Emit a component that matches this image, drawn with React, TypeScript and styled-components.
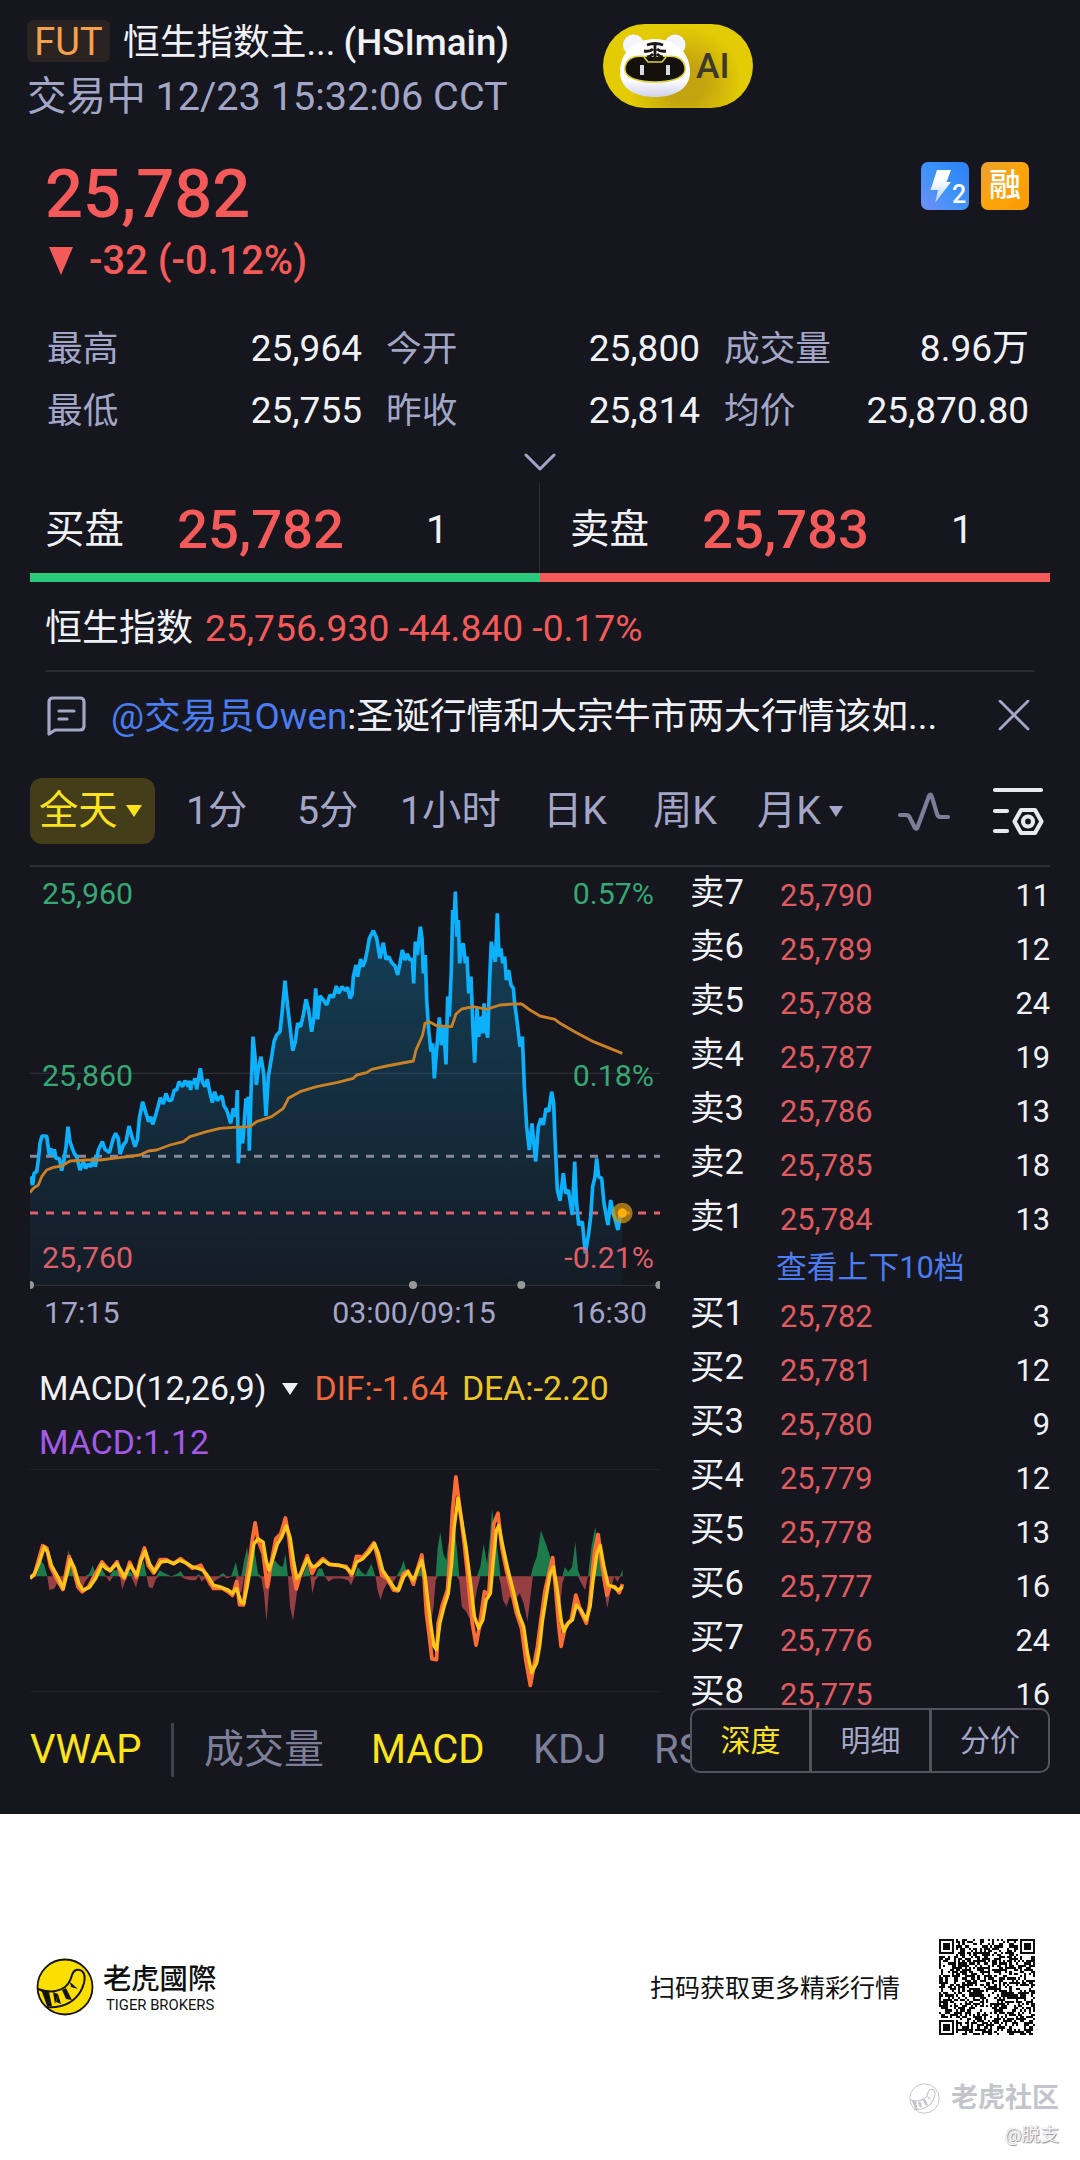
import styled, { createGlobalStyle } from "styled-components";

const GlobalStyle = createGlobalStyle`
  * {
    box-sizing: border-box;
  }

  body {
    margin: 0;
    background: #ffffff;
    font-family: Roboto, "Noto Sans CJK SC", sans-serif;
  }
`;

const colors = {
  bg: "#15161e",
  text: "#f0f1f5",
  muted: "#a3a6c6",
  dim: "#7d7f98",
  red: "#f35a59",
  bookRed: "#df5b60",
  green: "#2bc97b",
  chartGreen: "#36a873",
  yellow: "#fbe41c",
  blue: "#4b7cf0",
  line: "#2b2c34",
};

type Point = [number, number];

// ---------- data ----------

const stats = [
  { label: "最高", value: "25,964" },
  { label: "今开", value: "25,800" },
  { label: "成交量", value: "8.96万" },
  { label: "最低", value: "25,755" },
  { label: "昨收", value: "25,814" },
  { label: "均价", value: "25,870.80" },
];

const asks = [
  { label: "卖7", price: "25,790", size: 11 },
  { label: "卖6", price: "25,789", size: 12 },
  { label: "卖5", price: "25,788", size: 24 },
  { label: "卖4", price: "25,787", size: 19 },
  { label: "卖3", price: "25,786", size: 13 },
  { label: "卖2", price: "25,785", size: 18 },
  { label: "卖1", price: "25,784", size: 13 },
];

const bids = [
  { label: "买1", price: "25,782", size: 3 },
  { label: "买2", price: "25,781", size: 12 },
  { label: "买3", price: "25,780", size: 9 },
  { label: "买4", price: "25,779", size: 12 },
  { label: "买5", price: "25,778", size: 13 },
  { label: "买6", price: "25,777", size: 16 },
  { label: "买7", price: "25,776", size: 24 },
  { label: "买8", price: "25,775", size: 16 },
];

const pricePoints: Point[] = [
  [30, 950], [38, 975], [42, 940], [50, 935], [55, 900], [60, 850], [66, 828], [80, 828], [85, 865], [88, 885],
  [92, 865], [98, 885], [103, 868], [108, 895], [118, 895], [125, 932], [132, 900], [138, 860], [144, 800], [150, 845],
  [157, 865], [163, 880], [170, 890], [180, 930], [190, 905], [197, 925], [205, 912], [213, 920], [220, 893], [226, 920],
  [235, 870], [247, 845], [255, 868], [268, 878], [280, 835], [287, 820], [295, 835], [300, 882], [310, 855], [318, 845],
  [327, 798], [336, 830], [345, 860], [352, 840], [358, 775], [368, 725], [378, 760], [386, 785], [392, 770], [398, 793],
  [407, 765], [414, 740], [421, 713], [430, 732], [438, 700], [446, 722], [455, 720], [463, 690], [470, 690], [477, 665],
  [488, 680], [495, 662], [505, 680], [507, 662], [512, 690], [515, 665], [520, 672], [525, 655], [530, 688], [535, 660],
  [541, 625], [547, 665], [555, 680], [562, 658], [568, 690], [577, 728], [584, 695], [592, 722], [600, 712], [606, 708],
  [612, 738], [620, 750], [632, 790], [640, 745], [648, 770], [652, 690], [655, 910], [662, 800], [668, 850], [678, 715],
  [683, 760], [685, 710], [688, 872], [693, 700], [699, 530], [705, 590], [709, 675], [715, 625], [723, 590], [731, 640],
  [738, 768], [745, 650], [755, 590], [762, 545], [770, 525], [780, 515], [786, 460], [795, 362], [803, 440], [810, 500],
  [818, 572], [826, 545], [833, 490], [842, 500], [850, 465], [858, 418], [866, 450], [875, 515], [882, 470], [887, 385],
  [893, 478], [900, 408], [910, 420], [920, 435], [930, 405], [940, 412], [949, 378], [956, 400], [966, 380], [976, 392],
  [983, 382], [990, 415], [996, 405], [1000, 350], [1008, 315], [1013, 350], [1022, 297], [1028, 320], [1036, 300], [1042, 270],
  [1048, 235], [1060, 212], [1070, 235], [1080, 295], [1090, 248], [1098, 298], [1106, 290], [1115, 308], [1125, 318], [1133, 345],
  [1140, 310], [1147, 270], [1155, 300], [1162, 282], [1170, 300], [1177, 298], [1181, 370], [1186, 245], [1192, 285], [1201, 200],
  [1206, 235], [1210, 340], [1216, 285], [1220, 420], [1226, 510], [1233, 575], [1238, 550], [1243, 655], [1249, 580], [1258, 472],
  [1264, 555], [1271, 500], [1278, 613], [1283, 410], [1288, 470], [1294, 330], [1298, 150], [1302, 190], [1306, 95], [1311, 230],
  [1315, 180], [1319, 310], [1325, 260], [1330, 250], [1336, 310], [1341, 290], [1346, 400], [1353, 350], [1359, 510], [1364, 608],
  [1371, 440], [1376, 530], [1384, 470], [1388, 520], [1392, 430], [1397, 500], [1403, 533], [1409, 360], [1414, 245], [1420, 285],
  [1426, 305], [1432, 160], [1437, 290], [1443, 265], [1448, 310], [1454, 290], [1459, 360], [1466, 330], [1473, 375], [1480, 385],
  [1484, 430], [1492, 490], [1500, 560], [1507, 530], [1513, 680], [1520, 800], [1528, 870], [1536, 790], [1547, 905], [1555, 800],
  [1563, 775], [1570, 795], [1578, 745], [1586, 755], [1595, 695], [1601, 730], [1606, 860], [1612, 990], [1620, 1022], [1630, 940],
  [1637, 1000], [1645, 990], [1657, 1065], [1664, 905], [1669, 1020], [1676, 1095], [1687, 1085], [1696, 1180], [1706, 1120], [1712, 1070],
  [1718, 980], [1725, 950], [1730, 895], [1736, 950], [1745, 955], [1752, 1030], [1764, 1095], [1772, 1020], [1780, 1060], [1794, 1110],
  [1800, 1070], [1807, 1058],
];

const vwapPoints: Point[] = [
  [30, 998], [40, 985], [55, 975], [65, 950], [80, 930], [100, 922], [125, 918], [150, 903], [200, 900], [240, 900],
  [280, 895], [360, 885], [385, 873], [410, 870], [450, 855], [490, 845], [510, 830], [560, 815], [600, 805], [640, 802],
  [690, 800], [710, 785], [755, 770], [790, 745], [805, 715], [840, 695], [890, 680], [950, 668], [1000, 655], [1010, 645],
  [1040, 638], [1055, 628], [1100, 618], [1180, 603], [1188, 570], [1208, 525], [1215, 490], [1228, 485], [1250, 497], [1295, 500],
  [1308, 462], [1325, 447], [1360, 440], [1400, 448], [1440, 435], [1480, 432], [1505, 432], [1530, 450], [1560, 468], [1605, 478],
  [1620, 490], [1660, 513], [1720, 545], [1807, 580],
];

const deaPoints: Point[] = [
  [24, 655], [35, 640], [45, 610], [58, 560], [66, 575], [75, 615], [90, 650], [103, 685], [112, 640], [120, 598],
  [130, 625], [140, 670], [150, 690], [165, 682], [180, 655], [195, 612], [205, 625], [215, 630], [230, 610], [240, 630],
  [248, 650], [262, 615], [278, 645], [288, 600], [298, 572], [308, 610], [320, 635], [335, 605], [350, 602], [365, 610],
  [380, 600], [395, 608], [410, 620], [425, 625], [435, 630], [445, 645], [460, 675], [480, 682], [495, 690], [505, 700],
  [515, 685], [525, 725], [532, 730], [540, 680], [548, 620], [556, 550], [566, 535], [578, 545], [585, 600], [592, 630],
  [600, 600], [612, 550], [622, 530], [633, 495], [642, 530], [650, 600], [658, 655], [668, 640], [683, 595], [695, 620],
  [708, 615], [720, 600], [735, 612], [760, 615], [775, 622], [790, 640], [800, 605], [815, 595], [830, 575], [843, 550],
  [852, 580], [862, 630], [875, 655], [890, 685], [900, 690], [912, 650], [922, 635], [935, 660], [945, 630], [955, 600],
  [962, 640], [970, 730], [977, 800], [984, 860], [990, 870], [998, 790], [1008, 740], [1018, 700], [1026, 610], [1032, 500],
  [1041, 412], [1050, 480], [1060, 560], [1070, 660], [1080, 770], [1090, 805], [1100, 780], [1108, 720], [1118, 700], [1125, 600],
  [1132, 510], [1138, 495], [1148, 560], [1160, 630], [1172, 690], [1185, 760], [1197, 800], [1206, 880], [1216, 940], [1228, 910],
  [1235, 860], [1242, 780], [1252, 700], [1260, 640], [1268, 620], [1277, 690], [1286, 780], [1292, 815], [1303, 790], [1313, 780],
  [1322, 735], [1333, 750], [1346, 780], [1355, 740], [1362, 660], [1371, 580], [1379, 555], [1388, 620], [1398, 675], [1410, 680],
  [1422, 690], [1432, 680],
];

const difPoints: Point[] = [
  [24, 652], [34, 645], [43, 605], [54, 556], [64, 563], [73, 620], [87, 655], [102, 688], [109, 640], [117, 588],
  [128, 630], [138, 680], [148, 695], [163, 680], [178, 645], [195, 605], [205, 620], [214, 632], [231, 604], [240, 645],
  [248, 655], [261, 606], [277, 652], [286, 600], [296, 563], [305, 615], [318, 638], [333, 598], [348, 598], [365, 610],
  [382, 595], [395, 608], [410, 624], [430, 615], [440, 640], [460, 685], [480, 684], [495, 695], [505, 706], [515, 664],
  [522, 734], [531, 735], [538, 660], [546, 600], [552, 540], [559, 487], [565, 535], [578, 580], [588, 680], [597, 610],
  [608, 535], [620, 520], [631, 472], [639, 530], [647, 620], [657, 686], [667, 640], [683, 586], [694, 640], [706, 612],
  [720, 595], [735, 612], [760, 616], [775, 618], [788, 645], [800, 588], [815, 590], [828, 570], [841, 547], [850, 590],
  [860, 645], [873, 655], [888, 690], [898, 692], [911, 640], [922, 632], [935, 672], [945, 625], [955, 584], [961, 660],
  [966, 760], [973, 830], [979, 898], [990, 900], [994, 790], [1004, 735], [1016, 690], [1022, 590], [1028, 450], [1036, 348],
  [1046, 450], [1056, 550], [1065, 660], [1075, 790], [1084, 856], [1092, 800], [1104, 695], [1114, 705], [1120, 590], [1126, 490],
  [1136, 458], [1145, 560], [1156, 630], [1168, 690], [1180, 760], [1192, 805], [1202, 900], [1213, 978], [1222, 915], [1230, 860],
  [1238, 780], [1248, 690], [1257, 640], [1266, 592], [1274, 700], [1280, 790], [1286, 860], [1296, 800], [1310, 780], [1321, 705],
  [1333, 755], [1346, 790], [1354, 730], [1360, 640], [1366, 570], [1374, 522], [1384, 620], [1395, 705], [1402, 678], [1414, 680],
  [1424, 698], [1432, 672],
];

// 648 is the zero axis of the histogram
const ZERO = 648;
const histPoints: Point[] = [
  [24, 648], [40, 645], [50, 600], [58, 615], [65, 648], [70, 690], [82, 685], [90, 665], [103, 680], [108, 640],
  [115, 568], [124, 620], [130, 648], [138, 685], [146, 692], [155, 665], [165, 640], [173, 615], [182, 648], [195, 625],
  [205, 650], [213, 665], [222, 630], [232, 630], [238, 650], [243, 688], [250, 665], [256, 630], [264, 635], [270, 665],
  [276, 682], [283, 640], [294, 600], [301, 648], [306, 680], [315, 685], [324, 655], [332, 630], [345, 640], [360, 650],
  [375, 640], [382, 632], [390, 655], [405, 660], [418, 660], [425, 642], [432, 665], [440, 655], [450, 680], [460, 665],
  [472, 655], [482, 638], [492, 655], [502, 650], [513, 605], [520, 690], [526, 700], [533, 600], [540, 560], [545, 620],
  [549, 570], [556, 560], [566, 640], [574, 655], [580, 700], [586, 785], [592, 690], [598, 610], [606, 600], [615, 615],
  [625, 620], [631, 580], [637, 648], [642, 740], [649, 782], [656, 720], [662, 655], [672, 650], [683, 610], [690, 648],
  [695, 700], [702, 660], [710, 625], [718, 625], [725, 650], [733, 665], [745, 655], [765, 655], [780, 660], [787, 675],
  [795, 650], [803, 620], [812, 635], [822, 645], [835, 610], [845, 648], [850, 690], [857, 720], [864, 690], [872, 670],
  [885, 670], [895, 650], [905, 625], [912, 600], [920, 640], [928, 655], [937, 680], [945, 640], [955, 620], [960, 660],
  [968, 760], [975, 800], [983, 740], [988, 660], [993, 560], [999, 515], [1006, 580], [1013, 600], [1018, 545], [1025, 590],
  [1032, 500], [1038, 560], [1044, 660], [1050, 740], [1060, 755], [1070, 780], [1078, 740], [1086, 690], [1094, 620], [1102, 550],
  [1110, 610], [1116, 540], [1122, 445], [1130, 520], [1138, 600], [1142, 670], [1148, 720], [1156, 740], [1164, 710], [1175, 720],
  [1188, 700], [1197, 730], [1206, 785], [1214, 700], [1219, 620], [1228, 590], [1238, 510], [1250, 550], [1260, 590], [1266, 620],
  [1272, 660], [1278, 720], [1284, 740], [1289, 670], [1295, 620], [1303, 635], [1312, 620], [1320, 545], [1326, 630], [1332, 665],
  [1343, 690], [1350, 650], [1358, 560], [1367, 500], [1375, 560], [1382, 640], [1390, 700], [1396, 745], [1404, 690], [1412, 650],
  [1420, 665], [1426, 650], [1432, 628],
];

const toPoints = (points: Point[]) => points.map(([x, y]) => `${x},${y}`).join(" ");

const histArea = (clamp: (y: number) => number) =>
  toPoints([[24, ZERO], ...histPoints.map(([x, y]): Point => [x, clamp(y)]), [1432, ZERO]]);

// QR modules: three finder patterns, the rest filled from a fixed seed
const QR_SIZE = 45;
const qrPath = (() => {
  let seed = 20251223;
  const random = () => {
    seed = (seed * 1103515245 + 12345) % 2147483648;
    return seed / 2147483648;
  };
  const finder = (x: number, y: number) => {
    const ring = Math.max(Math.abs(x - 3), Math.abs(y - 3));
    return ring === 3 || ring <= 1;
  };
  const edge = QR_SIZE - 8;
  let path = "";
  for (let y = 0; y < QR_SIZE; y++) {
    for (let x = 0; x < QR_SIZE; x++) {
      let dark = random() > 0.46;
      if (x < 8 && y < 8) dark = x < 7 && y < 7 && finder(x, y);
      else if (x >= edge && y < 8) dark = x > edge && y < 7 && finder(x - edge - 1, y);
      else if (x < 8 && y >= edge) dark = x < 7 && y > edge && finder(x, y - edge - 1);
      if (dark) path += `M${x} ${y}h1v1h-1z`;
    }
  }
  return path;
})();

// ---------- styled components ----------

const Screen = styled.main`
  width: 1080px;
  height: 1814px;
  overflow: hidden;
  background: ${colors.bg};
  color: ${colors.text};
`;

const Header = styled.header`
  display: flex;
  height: 153px;
  padding: 20px 27px 0;
`;

const Instrument = styled.div`
  width: 576px;
`;

const TitleRow = styled.div`
  display: flex;
  gap: 13px;
  height: 42px;
  font-size: 36.7px;
  line-height: 46px;
  white-space: nowrap;
`;

const TypeTag = styled.span`
  width: 83px;
  height: 42px;
  border-radius: 6px;
  background: #2a2322;
  color: #f5a04c;
  font-size: 38px;
  line-height: 44px;
  text-align: center;
`;

const Ticker = styled.span`
  margin-left: -5px;
  font-weight: 500;
`;

const Session = styled.div`
  margin-top: 14px;
  color: ${colors.muted};
  font-size: 39.6px;
  line-height: 42px;
  white-space: nowrap;
`;

const AiButton = styled.button`
  display: flex;
  align-items: center;
  gap: 4px;
  width: 150px;
  height: 84px;
  margin-top: 4px;
  padding: 0 0 0 16px;
  border: 0;
  border-radius: 42px;
  background: radial-gradient(circle at 55% 70%, #c3a30f 18%, transparent 55%), #e3cb05;
  color: #3d3a2c;
  font: 500 35.5px/86px Roboto, sans-serif;
`;

const Quote = styled.section`
  display: flex;
  justify-content: space-between;
  height: 164px;
  padding: 0 51px 0 45px;
  color: ${colors.red};
`;

const LastPrice = styled.div`
  font-size: 67px;
  font-weight: 500;
  line-height: 82px;
`;

const Change = styled.div`
  display: flex;
  align-items: center;
  gap: 16px;
  margin-top: 6px;
  padding-left: 4px;
  font-size: 39.8px;
  font-weight: 500;
  line-height: 40px;
`;

const Badges = styled.div`
  display: flex;
  gap: 12px;
  margin-top: 9px;
`;

const MarginBadge = styled.span`
  width: 48px;
  height: 48px;
  border-radius: 7px;
  background: linear-gradient(135deg, #e9a02c, #fba40c 50%, #f99a05);
  color: #ffffff;
  font-size: 32px;
  font-weight: 500;
  line-height: 47px;
  text-align: center;
`;

const StatGrid = styled.section`
  display: grid;
  grid-template-columns: 315px 314px 305px;
  grid-auto-rows: 62px;
  column-gap: 24px;
  padding-left: 47px;
`;

const Stat = styled.div`
  display: flex;
  justify-content: space-between;
  font-size: 37px;
  line-height: 64px;
`;

const StatLabel = styled.span`
  color: ${colors.muted};
  font-size: 35.7px;
`;

const Expander = styled.div`
  display: flex;
  align-items: center;
  justify-content: center;
  height: 42px;
  padding-top: 2px;
`;

const BestQuotes = styled.section`
  display: grid;
  grid-template-columns: 1fr 1fr;
  padding: 0 30px;
`;

const BestQuote = styled.div<{ $side: "bid" | "ask" }>`
  display: grid;
  grid-template-columns: 132px 249px auto;
  height: 99px;
  padding-left: ${({ $side }) => ($side === "bid" ? 15 : 30)}px;
  border-bottom: 9px solid ${({ $side }) => ($side === "bid" ? colors.green : colors.red)};
  box-shadow: ${({ $side }) => ($side === "bid" ? `inset -1px 0 ${colors.line}` : "none")};
  font-size: 39.5px;
  line-height: 93px;
`;

const BestPrice = styled.span`
  color: ${colors.red};
  font-size: 54.5px;
  font-weight: 500;
`;

const IndexRow = styled.div`
  display: flex;
  gap: 12px;
  height: 90px;
  margin: 0 45px;
  border-bottom: 2px solid ${colors.line};
  font-size: 37px;
  line-height: 93px;
`;

const IndexValue = styled.span`
  color: ${colors.red};
  font-size: 37.2px;
`;

const NewsRow = styled.div`
  display: flex;
  align-items: center;
  height: 88px;
  padding: 0 50px 0 46px;
  font-size: 36.8px;
  line-height: 91px;
`;

const NewsText = styled.p`
  flex: 1;
  margin: 0 0 0 23px;
  white-space: nowrap;
`;

const Mention = styled.span`
  color: ${colors.blue};
`;

const Periods = styled.nav`
  display: flex;
  align-items: center;
  height: 66px;
  margin: 18px 30px 21px;
  color: ${colors.muted};
  font-size: 39.3px;
  line-height: 69px;
  white-space: nowrap;
`;

const Period = styled.span<{ $width: number }>`
  display: flex;
  align-items: center;
  gap: 8px;
  width: ${({ $width }) => $width}px;
`;

const ActivePeriod = styled(Period)`
  height: 66px;
  margin-right: 31px;
  padding-left: 9px;
  border-radius: 12px;
  background: #433d1a;
  color: ${colors.yellow};
`;

const Caret = styled.i<{ $w: number; $h: number }>`
  width: 0;
  height: 0;
  border: solid transparent;
  border-width: ${({ $w, $h }) => `${$h}px ${$w / 2}px 0`};
  border-top-color: currentColor;
`;

const Market = styled.section`
  display: grid;
  grid-template-columns: 660px 360px;
  margin: 0 30px;
  border-top: 2px solid ${colors.line};
`;

const Charts = styled.div`
  min-width: 0;
  overflow: hidden;
`;

const ChartBox = styled.div`
  position: relative;
  width: 630px;
  height: 423px;

  svg {
    display: block;
  }
`;

const ScaleLabel = styled.span<{ $top: number; $right?: boolean; $down?: boolean }>`
  position: absolute;
  top: ${({ $top }) => $top}px;
  ${({ $right }) => ($right ? "right: 6px;" : "left: 12px;")}
  color: ${({ $down }) => ($down ? "#dd5f6a" : colors.chartGreen)};
  font-size: 30.3px;
  line-height: 36px;
`;

const TimeAxis = styled.div`
  display: flex;
  justify-content: space-between;
  width: 630px;
  height: 72px;
  padding: 5px 13px 0 14px;
  color: ${colors.muted};
  font-size: 30.3px;
  line-height: 36px;
`;

const MidTime = styled.span`
  margin-left: 137px;
`;

const Legend = styled.div`
  display: flex;
  flex-wrap: wrap;
  align-items: center;
  width: 630px;
  height: 107px;
  padding-left: 9px;
  font-size: 33.8px;
  line-height: 54px;
`;

const LegendItem = styled.span<{ $color: string }>`
  margin-right: 14px;
  color: ${({ $color }) => $color};
`;

const LegendName = styled.span`
  display: flex;
  align-items: center;
  gap: 16px;
  margin-right: 16px;
`;

const MacdChart = styled.svg`
  display: block;
  width: 630px;
  height: 223px;
  border: solid #1f2028;
  border-width: 1px 0;
`;

const Indicators = styled.nav`
  display: flex;
  align-items: center;
  height: 116px;
  color: ${colors.dim};
  font-size: 40px;
  line-height: 118px;
  white-space: nowrap;
`;

const Indicator = styled.span<{ $active?: boolean; $width: number }>`
  flex: none;
  width: ${({ $width }) => $width}px;
  color: ${({ $active }) => ($active ? colors.yellow : "inherit")};
`;

const Separator = styled.i`
  flex: none;
  width: 3px;
  height: 54px;
  margin-right: 30px;
  background: #40414a;
`;

const Book = styled.div`
  display: flex;
  flex-direction: column;
`;

const Levels = styled.div`
  height: 841px;
  padding-top: 1px;
  overflow: hidden;
`;

const Level = styled.div`
  display: grid;
  grid-template-columns: 90px 1fr auto;
  height: 54px;
  font-size: 30.8px;
  line-height: 55px;
`;

const LevelLabel = styled.span`
  font-size: 34.5px;
  line-height: 49px;
`;

const LevelPrice = styled.span`
  color: ${colors.bookRed};
`;

const MoreLevels = styled.a`
  display: block;
  height: 43px;
  padding-left: 86px;
  color: ${colors.blue};
  font-size: 30.8px;
  line-height: 44px;
`;

const BookTabs = styled.div`
  display: grid;
  grid-template-columns: 117px 120px 1fr;
  height: 65px;
  border: 2px solid #52535d;
  border-radius: 10px;
`;

const BookTab = styled.span<{ $active?: boolean }>`
  color: ${({ $active }) => ($active ? colors.yellow : colors.muted)};
  font-size: 30px;
  line-height: 61px;
  text-align: center;

  & + & {
    border-left: 3px solid #52535d;
  }
`;

const Footer = styled.footer`
  width: 1080px;
  height: 346px;
  padding: 125px 21px 0 36px;
  background: #ffffff;
  color: #111111;
`;

const BrandRow = styled.div`
  display: flex;
  align-items: center;
  height: 96px;
  padding-right: 24px;
`;

const BrandName = styled.div`
  margin: 2px auto 0 9px;
  font: 500 28.3px/34px Roboto, "Noto Sans CJK TC", sans-serif;
`;

const BrandLatin = styled.div`
  padding-left: 3px;
  font-size: 14.8px;
  font-weight: 400;
  line-height: 16px;
`;

const ScanHint = styled.span`
  margin: -2px 39px 0 0;
  font-size: 25px;
`;

const Watermark = styled.div`
  display: flex;
  align-items: center;
  justify-content: flex-end;
  gap: 11px;
  margin-top: 45px;
  color: #c3c5cb;
  font-size: 27px;
  font-weight: 700;
  line-height: 36px;
`;

const Author = styled.div`
  margin-top: 1px;
  color: #f4f4f6;
  font-size: 18.7px;
  line-height: 36px;
  text-align: right;
  text-shadow: 1px 1px 1px #8b8d93, 0 0 1px #b5b7bc;
`;

// ---------- icons ----------

const TigerBot = () => (
  <svg width="73" height="66" viewBox="0 0 73 66">
    <defs>
      <linearGradient id="face" x1="0" y1="0" x2="0" y2="1">
        <stop offset="0.7" stopColor="#ffffff" />
        <stop offset="1" stopColor="#cfd2ea" />
      </linearGradient>
    </defs>
    <circle cx="14.5" cy="12" r="10.5" fill="#f4f5fc" />
    <circle cx="56" cy="12" r="10.5" fill="#f4f5fc" />
    <path d="M36 6C57 6 71 20 71 39C71 56 55 64 36 64C17 64 1 56 1 39C1 20 15 6 36 6Z" fill="url(#face)" />
    <path
      d="M15 24C20 22 27 24 36 24C45 24 51 22 57 24C64 26 67 32 66 38C64 46 50 49 36 49C22 49 8 46 6 38C5 32 8 26 15 24Z"
      fill="#14110c"
      stroke="#d9d13a"
      strokeWidth="1.500"
    />
    <path d="M25 24L29 29H43L47 24" fill="#14110c" stroke="#d9d13a" strokeWidth="1.500" />
    <path
      d="M28 12Q36 9 44 12M25 18Q31 19 34 16M47 18Q41 19 38 16M28 24Q31 24 34 21M44 24Q41 24 38 21M36 10V27"
      stroke="#1b1815"
      strokeWidth="2.800"
      fill="none"
    />
    <path d="M23 32V42M49 32V42" stroke="#d7dadf" strokeWidth="4" />
  </svg>
);

const LightningBadge = () => (
  <svg width="48" height="48" viewBox="0 0 48 48">
    <defs>
      <linearGradient id="flash" x1="0" y1="1" x2="1" y2="0">
        <stop offset="0" stopColor="#6f8ef5" />
        <stop offset="0.5" stopColor="#3d93f7" />
        <stop offset="1" stopColor="#2b7ff5" />
      </linearGradient>
      <linearGradient id="bolt" x1="0" y1="0" x2="0" y2="1">
        <stop offset="0.3" stopColor="#ffffff" />
        <stop offset="1" stopColor="#a9cdfb" />
      </linearGradient>
    </defs>
    <rect width="48" height="48" rx="7" fill="url(#flash)" />
    <path d="M16 8H30L25.500 20H30L14 41L17 28H9.500Z" fill="url(#bolt)" />
    <text x="31" y="41" fill="#ffffff" fontFamily="Roboto" fontSize="25" fontWeight="500">
      2
    </text>
  </svg>
);

const NoteIcon = () => (
  <svg width="42" height="42" viewBox="0 0 42 42" fill="none" stroke={colors.muted} strokeWidth="3.2" strokeLinecap="round" strokeLinejoin="round">
    <path d="M3 39V7Q3 3 7 3H34Q38 3 38 7V31Q38 35 34 35H9Z" />
    <path d="M13 16H28M13 24H21" />
  </svg>
);

const CloseIcon = () => (
  <svg width="32" height="32" viewBox="0 0 32 32" stroke={colors.muted} strokeWidth="2.8" strokeLinecap="round">
    <path d="M2 1L30 29M30 1L2 29" />
  </svg>
);

const WaveIcon = () => (
  <svg width="54" height="42" viewBox="0 0 54 42" fill="none" stroke={colors.dim} strokeWidth="4.2" strokeLinejoin="round" strokeLinecap="round">
    <path d="M3 25H9Q12 25 13 28L18 38Q20 40 21 36L32 6Q34 3 35 7L40 24Q41 27 44 27H51" />
  </svg>
);

const ChartSettingsIcon = () => (
  <svg width="52" height="50" viewBox="0 0 52 50" fill="none" stroke="#e9eaf0" strokeWidth="4.2" strokeLinecap="round">
    <path d="M3 4H49M3 25H15M3 45H15" />
    <path d="M29 24H43L49.500 35.500L43 47H29L22.500 35.500Z" strokeLinejoin="round" />
    <circle cx="36" cy="35.500" r="5" />
  </svg>
);

const TailLogo = ({ size, fill, stroke }: { size: number; fill: string; stroke: string }) => (
  <svg width={size} height={size} viewBox="0 0 58 58">
    <circle cx="29" cy="29" r="27.500" fill={fill} stroke={stroke} strokeWidth="1.8" />
    <path d="M2 31Q17 37 29 29Q34 25 36 17Q39 9 46 13Q50 17 48 25Q43 43 25 48Q17 50 10 49" fill="none" stroke={stroke} strokeWidth="2" />
    <path d="M2 31L6 34L11 48L16 48L13 34ZM17 34L22 36L19 46ZM22 36L25 46L20 44ZM26 32L30 30L36 42L30 41ZM34 24L42 31L35 29Z" fill={stroke} />
  </svg>
);

const PriceChart = () => (
  <svg width="630" height="423" viewBox="30 21 1890 1269">
    <defs>
      <linearGradient id="area" x1="0" y1="95" x2="0" y2="1275" gradientUnits="userSpaceOnUse">
        <stop offset="0" stopColor="#0fa8e6" stopOpacity="0.3" />
        <stop offset="1" stopColor="#0fa8e6" stopOpacity="0.04" />
      </linearGradient>
    </defs>
    <path d="M30 640H1920M30 1276H1920" stroke="#30343b" strokeWidth="3" />
    <polygon points={`30,1275 ${toPoints(pricePoints)} 1807,1275`} fill="url(#area)" />
    <path d="M30 889H1920" stroke="#85899a" strokeWidth="9" strokeDasharray="24 24" />
    <path d="M30 1059H1920" stroke="#e0606b" strokeWidth="9" strokeDasharray="24 24" />
    <polyline points={toPoints(pricePoints)} fill="none" stroke="#0cb0fb" strokeWidth="11" strokeLinejoin="bevel" />
    <polyline points={toPoints(vwapPoints)} fill="none" stroke="#c98026" strokeWidth="8.500" strokeLinejoin="round" />
    <circle cx="1807" cy="1059" r="31" fill="#d59b12" fillOpacity="0.7" />
    <circle cx="1807" cy="1059" r="14" fill="#ffae0a" />
    {[30, 1179, 1504, 1918].map((x) => (
      <circle key={x} cx={x} cy="1275" r="12" fill="#989898" />
    ))}
  </svg>
);

// ---------- page ----------

export default function App() {
  return (
    <>
      <GlobalStyle />
      <Screen>
        <Header>
          <Instrument>
            <TitleRow>
              <TypeTag>FUT</TypeTag>
              <span>恒生指数主...</span>
              <Ticker>(HSImain)</Ticker>
            </TitleRow>
            <Session>交易中 12/23 15:32:06 CCT</Session>
          </Instrument>
          <AiButton>
            <TigerBot />
            <span>AI</span>
          </AiButton>
        </Header>

        <Quote>
          <div>
            <LastPrice>25,782</LastPrice>
            <Change>
              <Caret $w={25} $h={28} />
              -32 (-0.12%)
            </Change>
          </div>
          <Badges>
            <LightningBadge />
            <MarginBadge>融</MarginBadge>
          </Badges>
        </Quote>

        <StatGrid>
          {stats.map((stat) => (
            <Stat key={stat.label}>
              <StatLabel>{stat.label}</StatLabel>
              <span>{stat.value}</span>
            </Stat>
          ))}
        </StatGrid>

        <Expander>
          <svg width="32" height="20" viewBox="0 0 32 20" fill="none" stroke={colors.muted} strokeWidth="3" strokeLinecap="round" strokeLinejoin="round">
            <path d="M2 2L16 16L30 2" />
          </svg>
        </Expander>

        <BestQuotes>
          <BestQuote $side="bid">
            <span>买盘</span>
            <BestPrice>25,782</BestPrice>
            <span>1</span>
          </BestQuote>
          <BestQuote $side="ask">
            <span>卖盘</span>
            <BestPrice>25,783</BestPrice>
            <span>1</span>
          </BestQuote>
        </BestQuotes>

        <IndexRow>
          <span>恒生指数</span>
          <IndexValue>25,756.930 -44.840 -0.17%</IndexValue>
        </IndexRow>

        <NewsRow>
          <NoteIcon />
          <NewsText>
            <Mention>@交易员Owen</Mention>:圣诞行情和大宗牛市两大行情该如...
          </NewsText>
          <CloseIcon />
        </NewsRow>

        <Periods>
          <ActivePeriod $width={125}>
            全天
            <Caret $w={16} $h={12} />
          </ActivePeriod>
          <Period $width={111}>1分</Period>
          <Period $width={103}>5分</Period>
          <Period $width={143}>1小时</Period>
          <Period $width={110}>日K</Period>
          <Period $width={104}>周K</Period>
          <Period $width={140}>
            月K
            <Caret $w={15} $h={11} />
          </Period>
          <Period $width={95}>
            <WaveIcon />
          </Period>
          <ChartSettingsIcon />
        </Periods>

        <Market>
          <Charts>
            <ChartBox>
              <PriceChart />
              <ScaleLabel $top={9}>25,960</ScaleLabel>
              <ScaleLabel $top={191}>25,860</ScaleLabel>
              <ScaleLabel $top={373} $down>
                25,760
              </ScaleLabel>
              <ScaleLabel $top={9} $right>
                0.57%
              </ScaleLabel>
              <ScaleLabel $top={191} $right>
                0.18%
              </ScaleLabel>
              <ScaleLabel $top={373} $right $down>
                -0.21%
              </ScaleLabel>
            </ChartBox>
            <TimeAxis>
              <span>17:15</span>
              <MidTime>03:00/09:15</MidTime>
              <span>16:30</span>
            </TimeAxis>
            <Legend>
              <LegendName>
                MACD(12,26,9)
                <Caret $w={16} $h={12} />
              </LegendName>
              <LegendItem $color="#f3683b">DIF:-1.64</LegendItem>
              <LegendItem $color="#ecc725">DEA:-2.20</LegendItem>
              <LegendItem $color="#a35ae6">MACD:1.12</LegendItem>
            </Legend>
            <MacdChart viewBox="24 327 1497 668" preserveAspectRatio="none">
              <polygon points={histArea((y) => Math.min(y, ZERO))} fill="#1c7a4b" />
              <polygon points={histArea((y) => Math.max(y, ZERO))} fill="#963f42" />
              <g fill="none" strokeWidth="3.800" strokeLinejoin="round">
                <polyline points={toPoints(difPoints)} stroke="#fb6d35" vectorEffect="non-scaling-stroke" />
                <polyline points={toPoints(deaPoints)} stroke="#fdc61a" strokeWidth="3.400" vectorEffect="non-scaling-stroke" />
              </g>
            </MacdChart>
            <Indicators>
              <Indicator $width={141} $active>
                VWAP
              </Indicator>
              <Separator />
              <Indicator $width={167}>成交量</Indicator>
              <Indicator $width={162} $active>
                MACD
              </Indicator>
              <Indicator $width={121}>KDJ</Indicator>
              <Indicator $width={80}>RSI</Indicator>
            </Indicators>
          </Charts>

          <Book>
            <Levels>
              {asks.map((level) => (
                <Level key={level.label}>
                  <LevelLabel>{level.label}</LevelLabel>
                  <LevelPrice>{level.price}</LevelPrice>
                  <span>{level.size}</span>
                </Level>
              ))}
              <MoreLevels>查看上下10档</MoreLevels>
              {bids.map((level) => (
                <Level key={level.label}>
                  <LevelLabel>{level.label}</LevelLabel>
                  <LevelPrice>{level.price}</LevelPrice>
                  <span>{level.size}</span>
                </Level>
              ))}
            </Levels>
            <BookTabs>
              <BookTab $active>深度</BookTab>
              <BookTab>明细</BookTab>
              <BookTab>分价</BookTab>
            </BookTabs>
          </Book>
        </Market>
      </Screen>

      <Footer>
        <BrandRow>
          <TailLogo size={58} fill="#fbdf03" stroke="#15130a" />
          <BrandName>
            老虎國際
            <BrandLatin>TIGER BROKERS</BrandLatin>
          </BrandName>
          <ScanHint>扫码获取更多精彩行情</ScanHint>
          <svg width="96" height="96" viewBox={`0 0 ${QR_SIZE} ${QR_SIZE}`} shapeRendering="crispEdges">
            <path d={qrPath} fill="#0c0c0c" />
          </svg>
        </BrandRow>
        <Watermark>
          <TailLogo size={31} fill="#ffffff" stroke="#c3c5cb" />
          老虎社区
        </Watermark>
        <Author>@脱支</Author>
      </Footer>
    </>
  );
}
